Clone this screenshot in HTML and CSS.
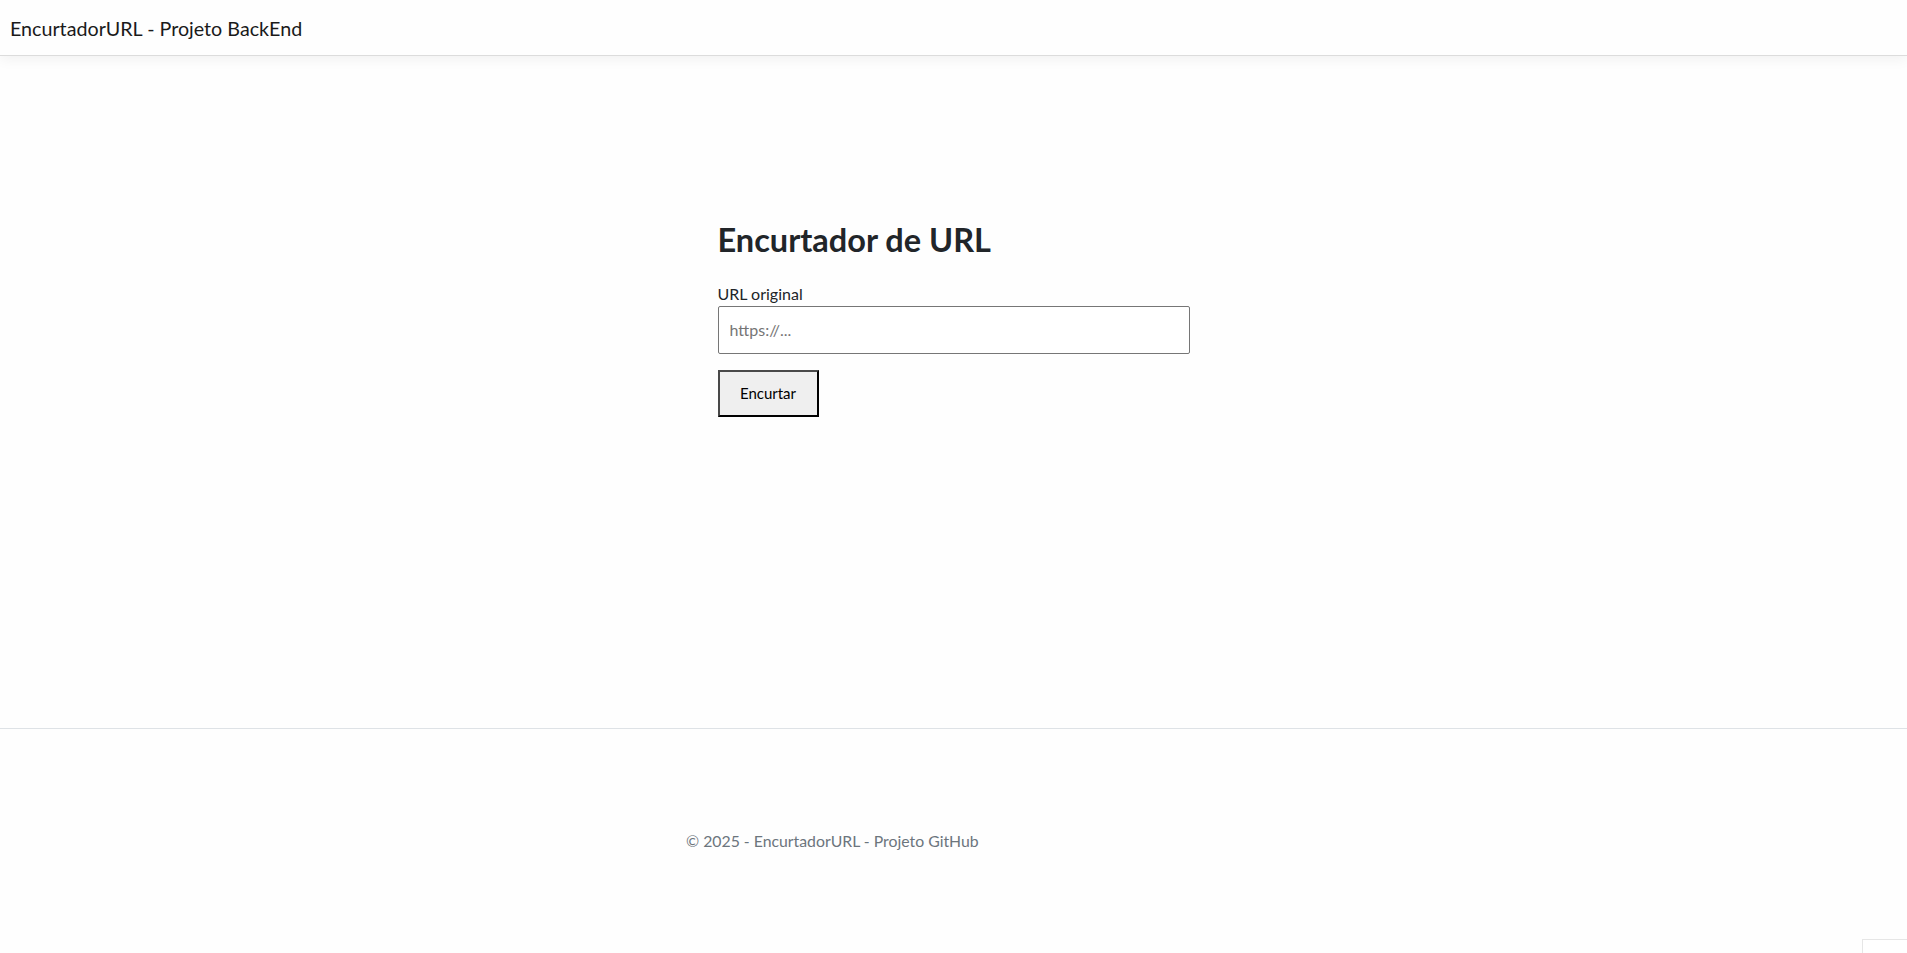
FILE: index.html
```html
<!DOCTYPE html>
<html lang="pt-BR">
<head>
<meta charset="utf-8">
<title>EncurtadorURL</title>
<link rel="stylesheet" href="styles.css">
</head>
<body>
<header class="navbar">
  <a class="brand" href="#">EncurtadorURL - Projeto BackEnd</a>
</header>
<main class="main">
  <section class="panel">
    <h2 class="title">Encurtador de URL</h2>
    <form class="form">
      <label class="label" for="url">URL original</label>
      <input class="input" id="url" type="text" placeholder="https://...">
      <button class="button" type="button">Encurtar</button>
    </form>
  </section>
</main>
<footer class="footer">
  <div class="footer-inner">© 2025 - EncurtadorURL - <a class="footer-link" href="#">Projeto GitHub</a></div>
</footer>
<div class="corner-popup"></div>
</body>
</html>
```
FILE: styles.css
```css
* { box-sizing: border-box; }
html, body { height: 100%; }
body {
  margin: 0;
  background: #fefefe;
  color: #212529;
  font-family: Lato, "Liberation Sans", sans-serif;
  font-size: 16px;
  line-height: 1.5;
  display: flex;
  flex-direction: column;
  overflow: hidden;
}
.navbar {
  height: 56px;
  flex: none;
  display: flex;
  align-items: center;
  padding: 2px 0 0 10px;
  background: #fefefe;
  border-bottom: 1px solid #dcdcdc;
  box-shadow: 0 4px 12px rgba(0,0,0,0.05);
  position: relative;
  z-index: 1;
}
.brand {
  font-size: 19.7px;
  color: #1a1a1a;
  text-decoration: none;
  line-height: 1.2;
}
.main {
  flex: 1;
  display: flex;
  justify-content: center;
  padding-top: 165px;
}
.panel { width: 472px; }
.title {
  margin: 0;
  font-size: 32.5px;
  font-weight: 700;
  line-height: 38px;
  color: #212529;
}
.form {
  display: flex;
  flex-direction: column;
  align-items: flex-start;
  margin-top: 24px;
}
.label {
  font-size: 16px;
  line-height: 22.8px;
  color: #212529;
}
.input {
  width: 472px;
  height: 48px;
  border: 1px solid #767676;
  border-radius: 2px;
  padding: 0 11px;
  font-family: inherit;
  font-size: 16px;
  background: #fff;
  color: #212529;
}
.input::placeholder { color: #757575; }
.button {
  margin-top: 16px;
  width: 101px;
  height: 47px;
  background: #efefef;
  border: 2px solid;
  border-color: #494949 #000 #000 #494949;
  font-family: inherit;
  font-size: 15px;
  color: #000;
  padding: 0;
}
.footer {
  height: 225px;
  flex: none;
  border-top: 1px solid #dee2e6;
  padding-top: 100px;
  display: flex;
  justify-content: center;
}
.footer-inner {
  width: 535px;
  color: #6c757d;
  font-size: 15.8px;
  line-height: 24px;
}
.footer-link { color: #6c757d; text-decoration: none; }
.corner-popup {
  position: fixed;
  left: 1862px;
  top: 939px;
  width: 60px;
  height: 30px;
  border: 1px solid #e6e6e6;
  background: #fff;
}
```
